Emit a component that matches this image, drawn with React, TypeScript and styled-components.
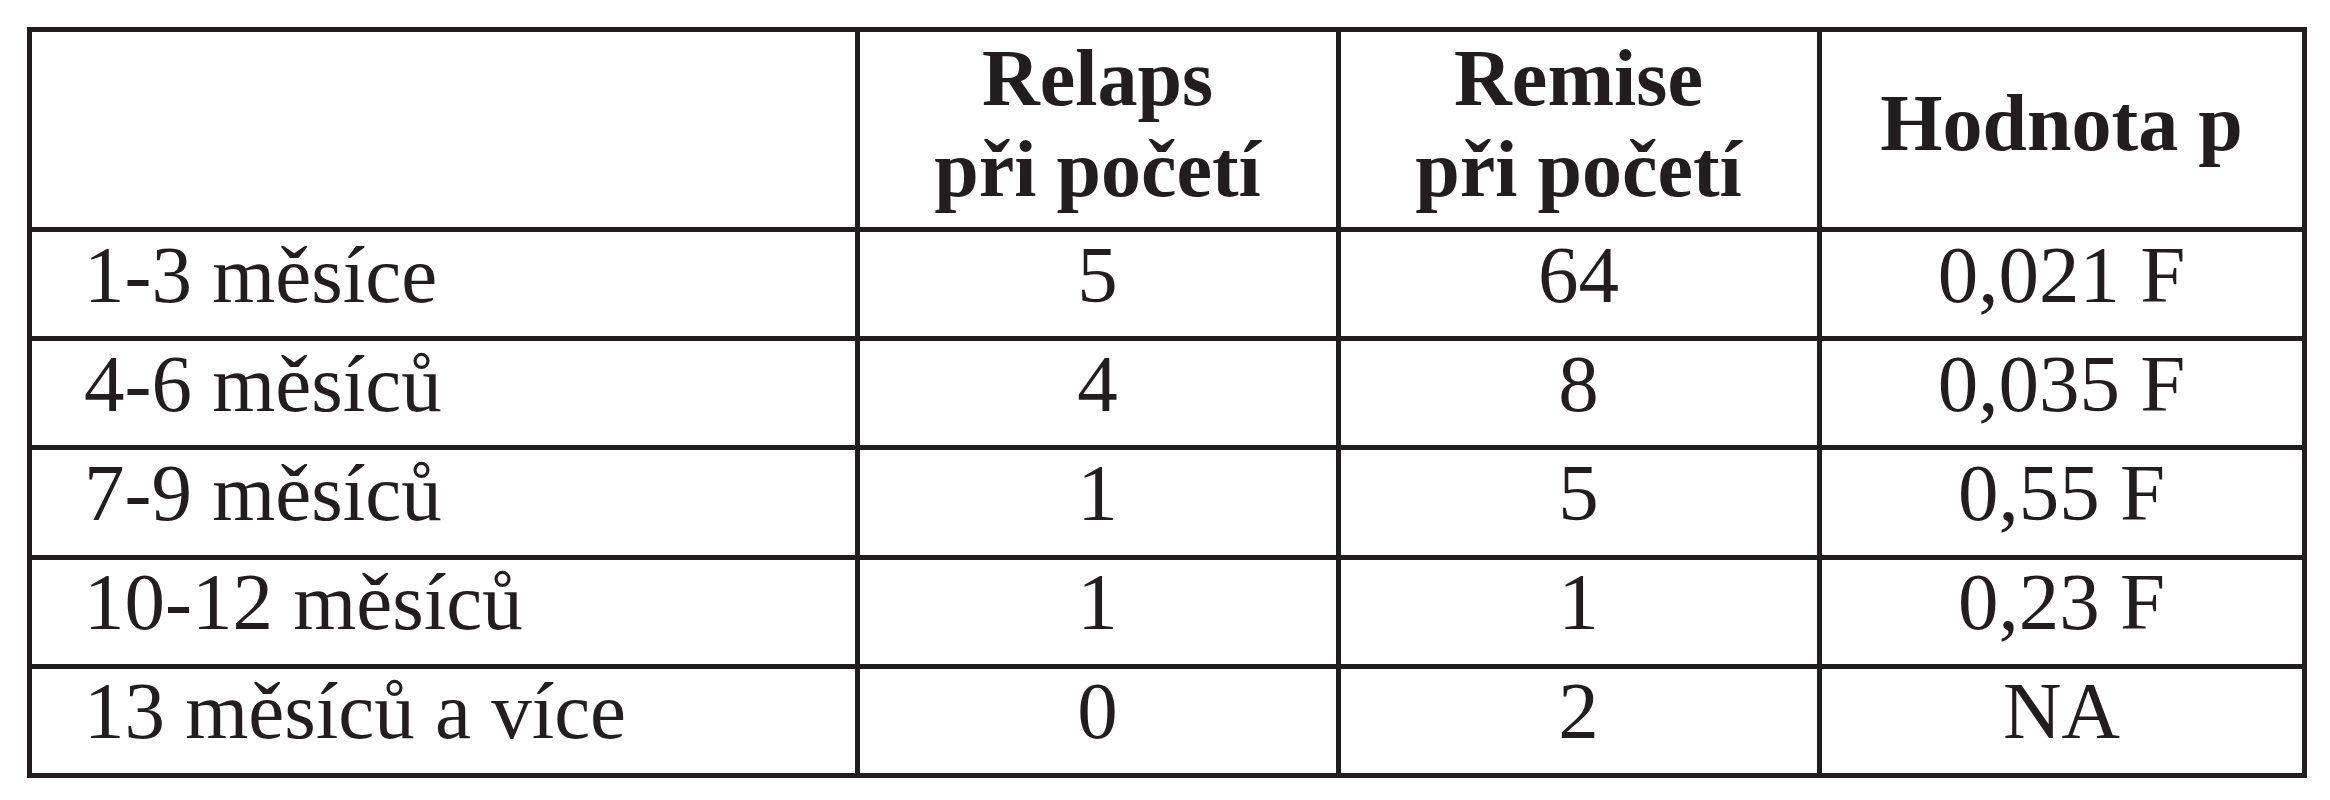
import { Fragment } from "react";
import styled, { createGlobalStyle } from "styled-components";

const GlobalStyle = createGlobalStyle`
  html, body {
    margin: 0;
    padding: 0;
    background: #ffffff;
  }
`;

const Page = styled.div`
  padding: 27px;
  font-family: "Liberation Serif", "Times New Roman", serif;
  color: #221e1f;
`;

// lines are the grid background showing through the gaps
const Grid = styled.div`
  display: grid;
  grid-template-columns: 822.5px 476px 476px 480px;
  grid-template-rows: 195px repeat(5, 104.2px);
  gap: 5px;
  padding: 5px;
  width: max-content;
  background: #221e1f;
`;

const Cell = styled.div<{ $align?: "left" | "center" }>`
  display: flex;
  align-items: center;
  justify-content: ${(p) => (p.$align === "left" ? "flex-start" : "center")};
  padding: 0 0 18px ${(p) => (p.$align === "left" ? "52px" : "0")};
  background: #ffffff;
  font-size: 81px;
  line-height: 1;
  white-space: nowrap;
`;

const HeadCell = styled(Cell)`
  flex-direction: column;
  justify-content: center;
  align-items: center;
  padding: 0 0 12px 0;
  font-size: 80px;
  font-weight: 700;
  line-height: 91px;
  text-align: center;
`;

type RowType = {
  label: string;
  relaps: string;
  remise: string;
  p: string;
};

const rows: RowType[] = [
  { label: "1-3 měsíce", relaps: "5", remise: "64", p: "0,021 F" },
  { label: "4-6 měsíců", relaps: "4", remise: "8", p: "0,035 F" },
  { label: "7-9 měsíců", relaps: "1", remise: "5", p: "0,55 F" },
  { label: "10-12 měsíců", relaps: "1", remise: "1", p: "0,23 F" },
  { label: "13 měsíců a více", relaps: "0", remise: "2", p: "NA" },
];

export default function App() {
  return (
    <>
      <GlobalStyle />
      <Page>
        <Grid>
          <HeadCell />
          <HeadCell>
            <span>Relaps</span>
            <span>při početí</span>
          </HeadCell>
          <HeadCell>
            <span>Remise</span>
            <span>při početí</span>
          </HeadCell>
          <HeadCell>
            <span>Hodnota p</span>
          </HeadCell>
          {rows.map((row) => (
            <Fragment key={row.label}>
              <Cell $align="left">{row.label}</Cell>
              <Cell>{row.relaps}</Cell>
              <Cell>{row.remise}</Cell>
              <Cell>{row.p}</Cell>
            </Fragment>
          ))}
        </Grid>
      </Page>
    </>
  );
}
